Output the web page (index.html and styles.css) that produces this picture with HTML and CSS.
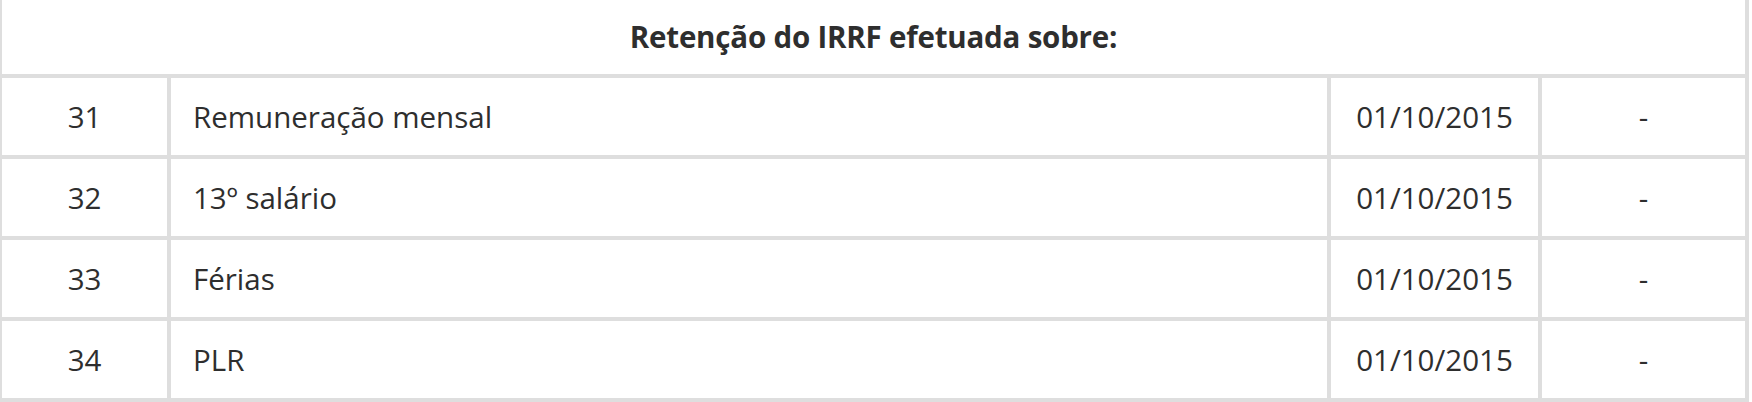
FILE: index.html
```html
<!DOCTYPE html>
<html lang="pt-BR">
<head>
<meta charset="utf-8">
<title>Retenção do IRRF</title>
<link rel="stylesheet" href="styles.css">
</head>
<body>
<table class="irrf">
  <colgroup>
    <col class="c-code">
    <col class="c-desc">
    <col class="c-date">
    <col class="c-val">
  </colgroup>
  <thead>
    <tr><th colspan="4">Retenção do IRRF efetuada sobre:</th></tr>
  </thead>
  <tbody>
    <tr><td class="code">31</td><td class="desc">Remuneração mensal</td><td class="date">01/10/2015</td><td class="val">-</td></tr>
    <tr><td class="code">32</td><td class="desc">13º salário</td><td class="date">01/10/2015</td><td class="val">-</td></tr>
    <tr><td class="code">33</td><td class="desc">Férias</td><td class="date">01/10/2015</td><td class="val">-</td></tr>
    <tr><td class="code">34</td><td class="desc">PLR</td><td class="date">01/10/2015</td><td class="val">-</td></tr>
    <tr class="next"><td class="code"></td><td class="desc"></td><td class="date"></td><td class="val"></td></tr>
  </tbody>
</table>
</body>
</html>
```
FILE: styles.css
```css
html, body {
  margin: 0;
  padding: 0;
  background: #ffffff;
  overflow: hidden;
  height: 402px;
}
body {
  font-family: "Open Sans", "Noto Sans", "DejaVu Sans", sans-serif;
  color: #2e2e2e;
}
.irrf {
  border-collapse: collapse;
  table-layout: fixed;
  width: 1751px;
  margin: -4px 0 0 -2px;
}
.c-code { width: 169px; }
.c-desc { width: 1160px; }
.c-date { width: 211px; }
.c-val  { width: 207px; }
.irrf th, .irrf td {
  border: 4px solid #dedede;
  padding: 0;
  font-size: 29.5px;
  line-height: 38px;
}
.irrf th {
  font-weight: 700;
  text-align: center;
  height: 74px;
  letter-spacing: -0.2px;
}
.irrf td {
  height: 77px;
  font-weight: 400;
}
.code, .date, .val { text-align: center; }
.desc { padding-left: 22px !important; text-align: left; }
```
